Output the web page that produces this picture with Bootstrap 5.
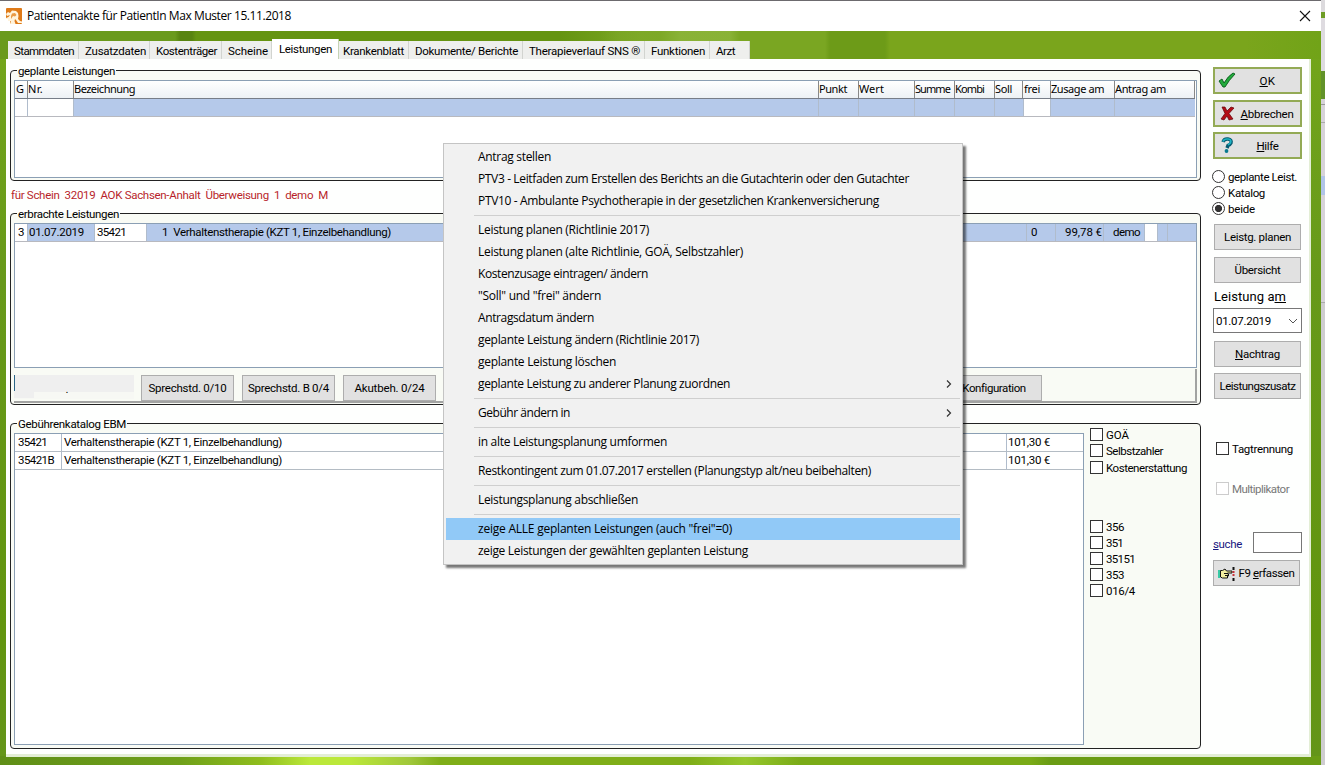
<!DOCTYPE html>
<html lang="de">
<head>
<meta charset="utf-8">
<title>Patientenakte</title>
<link rel="stylesheet" href="https://cdn.jsdelivr.net/npm/bootstrap@5.3.0/dist/css/bootstrap.min.css">
<style>
body{width:1325px;height:765px;overflow:hidden;font:11.5px/16px Roboto,"Liberation Sans",sans-serif;color:#000;background:#d9d6da}
[data-w]{display:inline-block;white-space:pre}
.desk{width:1325px;height:765px}
.win{width:1321px;height:765px;background:#6a9c15}
.titlebar{height:31px;border-top:1px solid #6c6a6e;background:#fff;padding:0 10px 0 6px;font:12px/16px "Open Sans","Noto Sans",sans-serif}
.frame{height:734px;padding:8px 9px 8px 6px;background:
 linear-gradient(90deg,#0000 0 600px,#83ac2e66 620px 660px,#97bd4888 680px 730px,#6f9f1a00 740px 1320px) 0 0/100% 28px no-repeat,
 linear-gradient(90deg,#6a9a1c 0 175px,#588410 180px 192px,#659411 196px 560px,#7aa622 640px 825px,#6d9b18 830px 885px,#7aa51c 890px 1245px,#71a318 1320px) 0 0/100% 28px no-repeat,
 linear-gradient(90deg,#5f8e17 0,#6fa01a 180px,#8fbd1d 260px,#bbe83a 310px 350px,#a0c73a 410px,#7fae18 440px 690px,#96c72c 745px,#7aab17 800px 1030px,#6a9c14 1050px 1320px) 0 100%/100% 9px no-repeat,
 linear-gradient(#74a61b,#67991a 250px,#62950f 600px,#64951a)}
.strip{width:4px;background:linear-gradient(#dcdadd 0 12px,#6d9c25 12px 18px,#dedbe0 18px 71px,#62922a 71px 99px,#d7d3d9 99px 104px,#999 104px 105px,#d7d3d9 105px 122px,#aaa 122px 123px,#d7d3d9 123px 176px,#b1c4e8 176px 195px,#d7d3d9 195px 302px,#aaa 302px 303px,#cfcdd0 303px)}
.tabs{height:20px;padding-left:2px}
.tabs>div{height:18px;background:#eeefed;border-right:1px solid #d2d4d0;padding:2px 0 0 6px}
.tabs>.on{height:20px;background:#fff;border-color:#c5d3b5;padding-top:2px;z-index:1}
.page-body{height:698px;width:1305px;background:#fefffe;border:solid #e3eed5;border-width:0 2px 3px 0;padding:11px 0 0 4px}
.maincol{width:1191px}
.grp{border:1px solid #222;border-radius:4px;position:relative;background:#f9fbf5}
.grp>.cap{position:absolute;left:6px;top:-7px;line-height:15px;height:12px;background:linear-gradient(#fefffe 6px,#f9fbf5 6px);padding:0 1px}
.grid{border:1px solid #8b9fb4;background:#fff}
.hd{height:18px;background:linear-gradient(#fff,#edf1f5);border-bottom:1px solid #777d88;font:11px/16px "Noto Sans",sans-serif}
.hd>div{border-left:1px solid #888}
.hd>div:first-child{border:0;padding-left:1px}
.rw{height:18px;background:#b5c9ea;border-bottom:1px solid #b8b9bf}
.rw>div,.lst>div{border-left:1px solid #b0bccc}
.rw>.wh{background:#fff}
.lst{height:18px;border-bottom:1px solid #b4bcc4;line-height:17px}
.lst>div:first-child,.rw>div:first-child{border:0}
.pbtn{border:1px solid #adadad;background:#e1e1e1;height:26px;border-radius:0;color:#000;padding:0;font:inherit;width:87px;display:flex;align-items:center;justify-content:center}
.gbtn{height:27px;width:89px;border:2px solid #93aa55;position:relative}
.gbtn svg{position:absolute;left:3px;top:2px}
.bx{width:13px;height:13px;border:1px solid #333;background:#fff;flex:none}
.rd{border-radius:50%}
.rd.sel{background:radial-gradient(circle,#333 0 3.2px,#fff 4px)}
.ck{height:16px;gap:3px}
.ck span{line-height:16px;padding-top:1px}
.side{width:104px;padding-left:12px}
.combo{width:89px;height:25px;border:1px solid #777;background:#fff;padding:0 3px 0 2px}
.ctx{left:443px;top:143px;width:520px;height:422px;background:#f1f1f1;border:1px solid #c4c4c4;border-radius:0;padding:2px;box-shadow:3px 3px 2px #0008;font:12px/22px "Open Sans","Noto Sans",sans-serif;color:#000;z-index:5}
.ctx .dropdown-item{height:22px;line-height:22px;padding:0 8px 0 32px;color:#000}
.ctx .hot{background:#91c9f7}
.ctx hr{margin:3px 0 3px 28px;border:0;border-top:1px solid #cfcfcf;opacity:1;height:1px}
</style>
</head>
<body>
<div class="desk d-flex position-relative">
<div class="win">
 <div class="titlebar d-flex align-items-center">
  <svg width="16" height="16" viewBox="0 0 16 16"><rect width="16" height="16" rx="1" fill="#df7a18"/><path d="M0 6 2 4 4 5 6 2.500 10 3 12 5 12.500 8 12 11 14 13 16 13.500V15H12L10 12 9 11 8.500 13 9.500 16H4L5 13 2 14 0 12 0 10 2.500 9 4 7 1 8Z" fill="#fff3dc"/><path d="M6 5.500 9 5 10.500 7 9 8.500 7 8 5 11 5 8Z" fill="#e99a45"/><path d="M0 11h2v2h2v3H0Z" fill="#fff"/></svg>
  <span style="margin-left:5px" data-w="264">Patientenakte für PatientIn Max Muster 15.11.2018</span>
  <svg class="ms-auto" width="12" height="12" viewBox="0 0 12 12"><path d="M1 1 11 11M11 1 1 11" stroke="#111" stroke-width="1.1"/></svg>
 </div>
 <div class="frame">
  <div class="tabs d-flex align-items-end">
   <div style="width:71px"><span data-w="60">Stammdaten</span></div>
   <div style="width:71px"><span data-w="61">Zusatzdaten</span></div>
   <div style="width:72px"><span data-w="61">Kostenträger</span></div>
   <div style="width:50px"><span data-w="40">Scheine</span></div>
   <div class="on" style="width:67px;padding-left:7px"><span data-w="53">Leistungen</span></div>
   <div style="width:70px;padding-left:4px"><span data-w="61">Krankenblatt</span></div>
   <div style="width:114px"><span data-w="103">Dokumente/ Berichte</span></div>
   <div style="width:122px"><span data-w="111">Therapieverlauf SNS ®</span></div>
   <div style="width:65px"><span data-w="54">Funktionen</span></div>
   <div style="width:40px"><span data-w="19">Arzt</span></div>
  </div>
  <div class="page-body d-flex">
   <div class="maincol">
    <div class="grp" style="height:111px;padding:9px 3px 0">
     <span class="cap"><span data-w="97">geplante Leistungen</span></span>
     <div class="grid" style="height:98px">
      <div class="hd d-flex" style="width:1180px">
       <div style="width:12px">G</div><div style="width:46px"><span data-w="15">Nr.</span></div><div style="width:745px"><span data-w="61">Bezeichnung</span></div><div style="width:40px"><span data-w="28">Punkt</span></div><div style="width:56px"><span data-w="25">Wert</span></div><div style="width:40px"><span data-w="35">Summe</span></div><div style="width:40px"><span data-w="29">Kombi</span></div><div style="width:28px"><span data-w="17">Soll</span></div><div style="width:28px;padding-left:1px"><span data-w="16">frei</span></div><div style="width:64px"><span data-w="53">Zusage am</span></div><div style="width:81px;border-right:1px solid #888"><span data-w="51">Antrag am</span></div>
      </div>
      <div class="rw d-flex" style="width:1180px">
       <div class="wh" style="width:12px"></div><div class="wh" style="width:46px"></div><div style="width:745px"></div><div style="width:40px"></div><div style="width:56px"></div><div style="width:40px"></div><div style="width:40px"></div><div style="width:29px"></div><div class="wh" style="width:27px"></div><div style="width:64px"></div><div style="width:81px"></div>
      </div>
     </div>
    </div>
    <div class="d-flex align-items-center" style="height:32px;color:#b81f2b;padding:0 0 5px 1px"><span data-w="317">für Schein  32019  AOK Sachsen-Anhalt  Überweisung  1  demo  M</span></div>
    <div class="grp" style="height:192px;padding:9px 3px 0">
     <span class="cap"><span data-w="101">erbrachte Leistungen</span></span>
     <div class="grid" style="height:145px">
      <div class="rw d-flex">
       <div class="wh" style="width:12px;padding-left:3px">3</div><div style="width:67px;padding-left:1px"><span data-w="55">01.07.2019</span></div><div class="wh" style="width:52px;padding-left:2px"><span data-w="29">35421</span></div><div style="width:880px;padding-left:15px"><span data-w="229">1  Verhaltenstherapie (KZT 1, Einzelbehandlung)</span></div>
       <div style="width:29px;padding-left:4px">0</div><div style="width:48px;padding-left:9px"><span data-w="37">99,78 €</span></div><div style="width:41px;padding-left:9px"><span data-w="27">demo</span></div><div class="wh" style="width:13px"></div><div style="width:10px"></div><div class="flex-fill"></div>
      </div>
     </div>
     <div class="d-flex" style="height:34px;border:solid #a2a3a2;border-width:0 2px 2px 0;margin-top:1px;padding-top:6px">
      <div class="text-center" style="width:120px;height:24px;line-height:28px;padding-right:14px;background:linear-gradient(90deg,#2a6588 0 1px,#0000 1px) 0 0/1px 16px no-repeat,linear-gradient(#efefef,#efefef) 0 0/20px 23px no-repeat,linear-gradient(#efefef 17px,#f7f8f4 17px)">.</div>
      <div class="d-flex" style="gap:8px;margin-left:7px">
       <div class="pbtn" style="width:93px"><span data-w="78">Sprechstd. 0/10</span></div>
       <div class="pbtn" style="width:93px"><span data-w="81">Sprechstd. B 0/4</span></div>
       <div class="pbtn" style="width:93px"><span data-w="70">Akutbeh. 0/24</span></div>
      </div>
      <div class="pbtn" style="width:94px;margin-left:512px;padding-right:2px"><span data-w="63">Konfiguration</span></div>
     </div>
    </div>
    <div class="grp d-flex" style="height:326px;margin-top:18px;padding:9px 3px 0">
     <span class="cap"><span data-w="108">Gebührenkatalog EBM</span></span>
     <div class="grid" style="width:1070px;height:312px">
      <div class="lst d-flex"><div style="width:46px;padding-left:3px"><span data-w="29">35421</span></div><div style="width:945px;padding-left:2px"><span data-w="218">Verhaltenstherapie (KZT 1, Einzelbehandlung)</span></div><div style="width:77px;padding-left:1px"><span data-w="42">101,30 €</span></div></div>
      <div class="lst d-flex"><div style="width:46px;padding-left:3px"><span data-w="36">35421B</span></div><div style="width:945px;padding-left:2px"><span data-w="218">Verhaltenstherapie (KZT 1, Einzelbehandlung)</span></div><div style="width:77px;padding-left:1px"><span data-w="42">101,30 €</span></div></div>
     </div>
     <div style="margin:-7px 0 0 6px">
      <div style="height:92px">
      <div class="ck d-flex align-items-center"><i class="bx"></i><span data-w="23">GOÄ</span></div>
      <div class="ck d-flex align-items-center"><i class="bx"></i><span data-w="57">Selbstzahler</span></div>
      <div class="ck d-flex align-items-center" style="margin-top:1px"><i class="bx"></i><span data-w="81">Kostenerstattung</span></div>
      </div>
      <div class="ck d-flex align-items-center"><i class="bx"></i><span data-w="18">356</span></div>
      <div class="ck d-flex align-items-center"><i class="bx"></i><span data-w="17">351</span></div>
      <div class="ck d-flex align-items-center"><i class="bx"></i><span data-w="29">35151</span></div>
      <div class="ck d-flex align-items-center"><i class="bx"></i><span data-w="18">353</span></div>
      <div class="ck d-flex align-items-center"><i class="bx"></i><span data-w="29">016/4</span></div>
     </div>
    </div>
   </div>
   <div class="side" style="margin-top:-3px">
    <div class="pbtn gbtn" style="padding-left:20px"><svg width="18" height="18" viewBox="0 0 18 18"><path d="M1 10 4 8 6 12Q10 5 15 2L17 3Q11 9 7 16L5 16Z" fill="#22ab3c" stroke="#075a18" stroke-width=".9"/></svg><span data-w="16"><u>O</u>K</span></div>
    <div class="pbtn gbtn" style="margin-top:6px;padding-left:19px"><svg width="18" height="18" viewBox="0 0 18 18"><path d="M4 3 7 3 9 7 13 3 16 4 11 9.500 15 15 11 16 9 12 6 16 3 15 7 9.500Z" fill="#b40d16" stroke="#620007" stroke-width=".7"/></svg><span data-w="53"><u>A</u>bbrechen</span></div>
    <div class="pbtn gbtn" style="margin-top:5px;padding-left:20px"><svg width="18" height="18" viewBox="0 0 18 18"><path d="M5 6Q6 2.500 10 3T13 7Q12 9 10 9.500L9 12" fill="none" stroke="#075a70" stroke-width="3.400"/><path d="M5 5.500Q6 2.500 10 3T12.500 7L10 9" fill="none" stroke="#20b4c4" stroke-width="1.600"/><circle cx="8.500" cy="15" r="1.900" fill="#087a90"/></svg><span data-w="22"><u>H</u>ilfe</span></div>
    <div style="margin:9px 0 0 -1px">
     <div class="ck d-flex align-items-center"><i class="bx rd"></i><span data-w="69">geplante Leist.</span></div>
     <div class="ck d-flex align-items-center"><i class="bx rd"></i><span data-w="37">Katalog</span></div>
     <div class="ck d-flex align-items-center"><i class="bx rd sel"></i><span data-w="27">beide</span></div>
    </div>
    <div class="pbtn" style="margin:8px 0 0 1px"><span data-w="67">Leistg. planen</span></div>
    <div class="pbtn" style="margin:7px 0 0 1px"><span data-w="46">Übersicht</span></div>
    <div style="height:25px;padding:6px 0 0 1px;font-size:13px"><span data-w="72">Leistung a<u>m</u></span></div>
    <div class="combo d-flex align-items-center justify-content-between"><span data-w="55">01.07.2019</span><svg width="10" height="6" viewBox="0 0 10 6"><path d="M1 1 5 5 9 1" fill="none" stroke="#555"/></svg></div>
    <div class="pbtn" style="margin:8px 0 0 1px"><span data-w="45"><u>N</u>achtrag</span></div>
    <div class="pbtn" style="margin:6px 0 0 1px"><span data-w="76">Leistungszusatz</span></div>
    <div class="ck d-flex align-items-center" style="margin:41px 0 0 3px"><i class="bx"></i><span data-w="61">Tagtrennung</span></div>
    <div class="ck d-flex align-items-center" style="margin:24px 0 0 3px;color:#777"><i class="bx" style="border-color:#ccc"></i><span data-w="57">Multiplikator</span></div>
    <div class="d-flex align-items-center justify-content-between" style="width:89px;margin-top:36px;color:#16167e"><span data-w="29" style="padding-top:2px"><u>s</u>uche</span><div style="width:49px;height:21px;border:1px solid #777;background:#fff"></div></div>
    <div class="pbtn" style="margin-top:7px;gap:4px;padding-right:1px"><svg width="17" height="15" viewBox="0 0 17 15"><path d="M2.500 4.500h2L7 3l1.500 2H14v2H9.500v1h1v2h-1v2h-5l-2-1Z" fill="#f4efa0" stroke="#111"/><path d="M6 7.500h4M7 9.500h3" stroke="#111"/><path d="M1 4v8" stroke="#39c9a5" stroke-width="2"/><path d="M15.500 1v3M15.500 12v3" stroke="#111" stroke-width="2"/><path d="M15.500 5v6" stroke="#c8343a" stroke-width="2" stroke-dasharray="2 1"/></svg><span data-w="56">F9 <u>e</u>rfassen</span></div>
   </div>
  </div>
 </div>
</div>
<div class="strip"></div>
<div class="dropdown-menu show ctx position-absolute">
 <div class="dropdown-item"><span data-w="73">Antrag stellen</span></div>
 <div class="dropdown-item"><span data-w="431">PTV3 - Leitfaden zum Erstellen des Berichts an die Gutachterin oder den Gutachter</span></div>
 <div class="dropdown-item"><span data-w="401">PTV10 - Ambulante Psychotherapie in der gesetzlichen Krankenversicherung</span></div>
 <hr>
 <div class="dropdown-item"><span data-w="171">Leistung planen (Richtlinie 2017)</span></div>
 <div class="dropdown-item"><span data-w="265">Leistung planen (alte Richtlinie, GOÄ, Selbstzahler)</span></div>
 <div class="dropdown-item"><span data-w="170">Kostenzusage eintragen/ ändern</span></div>
 <div class="dropdown-item"><span data-w="123">"Soll" und "frei" ändern</span></div>
 <div class="dropdown-item"><span data-w="116">Antragsdatum ändern</span></div>
 <div class="dropdown-item"><span data-w="221">geplante Leistung ändern (Richtlinie 2017)</span></div>
 <div class="dropdown-item"><span data-w="138">geplante Leistung löschen</span></div>
 <div class="dropdown-item d-flex align-items-center justify-content-between"><span data-w="252">geplante Leistung zu anderer Planung zuordnen</span><svg width="6" height="8" viewBox="0 0 6 8"><path d="M1 .5 4.500 4 1 7.500" fill="none" stroke="#333" stroke-width="1.200"/></svg></div>
 <hr>
 <div class="dropdown-item d-flex align-items-center justify-content-between"><span data-w="92">Gebühr ändern in</span><svg width="6" height="8" viewBox="0 0 6 8"><path d="M1 .5 4.500 4 1 7.500" fill="none" stroke="#333" stroke-width="1.200"/></svg></div>
 <hr>
 <div class="dropdown-item"><span data-w="189">in alte Leistungsplanung umformen</span></div>
 <hr>
 <div class="dropdown-item"><span data-w="393">Restkontingent zum 01.07.2017 erstellen (Planungstyp alt/neu beibehalten)</span></div>
 <hr>
 <div class="dropdown-item"><span data-w="160">Leistungsplanung abschließen</span></div>
 <hr>
 <div class="dropdown-item hot"><span data-w="254">zeige ALLE geplanten Leistungen (auch "frei"=0)</span></div>
 <div class="dropdown-item"><span data-w="270">zeige Leistungen der gewählten geplanten Leistung</span></div>
</div>
</div>
<script src="https://cdn.jsdelivr.net/npm/bootstrap@5.3.0/dist/js/bootstrap.bundle.min.js"></script>
<script>
// Tracks every label to the width given in its data-w attribute.
document.querySelectorAll('[data-w]').forEach(function(el){
  var extra = el.dataset.w - el.getBoundingClientRect().width;
  el.style.letterSpacing = (extra / el.textContent.length).toFixed(3) + 'px';
});
</script>
</body>
</html>
